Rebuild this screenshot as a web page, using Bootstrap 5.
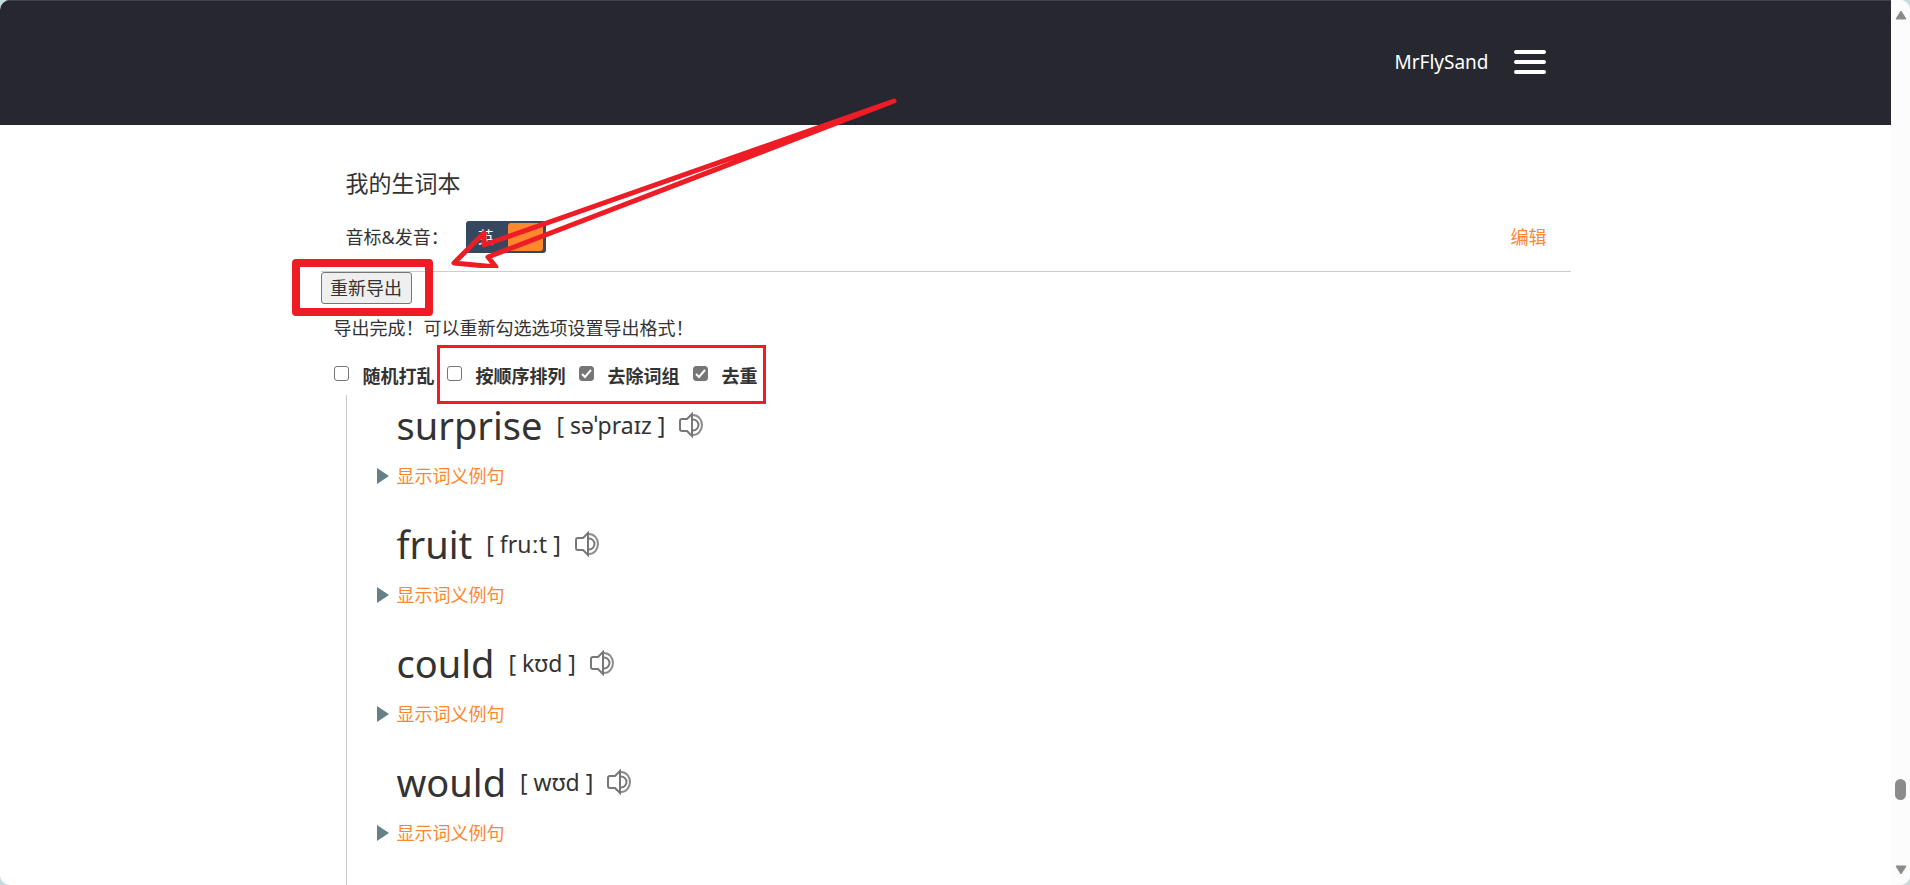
<!DOCTYPE html>
<html lang="zh-CN">
<head>
<meta charset="utf-8">
<meta name="viewport" content="width=device-width, initial-scale=1">
<title>我的生词本</title>
<link href="https://cdn.jsdelivr.net/npm/bootstrap@5.3.0/dist/css/bootstrap.min.css" rel="stylesheet">
<style>
html{background:#c3dcde}
body{font-family:"Noto Sans","Noto Sans CJK SC",sans-serif;font-size:18px;line-height:24px;color:#333;background:#c3dcde}
.window-frame{height:100vh;border-radius:10px;background:#fff}
.site-head{background:#272730;height:125px;border-top:1px solid #3d444b}
.wrap{max-width:1250px;width:100%;margin:0 auto}
.user-link{color:#fff;text-decoration:none;font-size:19px}
.menu-btn{border:0;background:none;padding:0;width:32px;height:26px;margin:0 25px}
.menu-btn svg,.speak svg{display:block}
.page-title{font-size:23px;line-height:32px;font-weight:400}
.accent{color:#ff872e;text-decoration:none}
.top-box{border-bottom:1px solid #ccc;padding:42px 24px 18px 25px}
.voice-row{margin-top:22px}
.voice{margin-left:17px}
.switch-btn{width:80px;height:32px;border:0;border-radius:3px;background:#35485f;color:#fff;font-size:16px;padding:2px 3px 2px 12px}
.knob{width:35px;height:28px;border-radius:3px;background:#ff872e}
.export-btn{display:block;width:91px;height:32px;border:1px solid #767676;border-radius:3px;background:#efefef;color:#333;padding:0}
.notice{margin:12px 0 0 13px}
.opts{padding:24px 0 0 13px;height:55px;gap:12px}
.others{gap:13px}
.opt{gap:14px}
.opts input{width:15px;height:15px;margin:2px 0 0;border:1px solid #767676;border-radius:3px;appearance:none;background:#fff;flex:none}
.opts input:checked{background:#767676 url("data:image/svg+xml,%3Csvg xmlns='http://www.w3.org/2000/svg' viewBox='0 0 13 13'%3E%3Cpath d='M2 7L5 10L11 3' fill='none' stroke='white' stroke-width='2'/%3E%3C/svg%3E") center/13px}
.opts label{font-weight:700}
.words{margin:0 0 0 25px;padding:0 0 0 50px;border-left:1px solid #ccc}
.entry{height:119px}
.head-row{height:60px;gap:14px}
.term{font-size:38px;line-height:60px;font-weight:400}
.phon{font-size:23px;line-height:60px}
.speak{border:0;background:none;padding:0}
.more{margin:9px 0 0 -20px;gap:8px}
.side-scroll{width:19px;background:#fcfcfc;padding:10px 0}
.scroll-thumb{width:11px;height:21px;border-radius:6px;background:#8b8b8b;margin-bottom:65px}
.mark-btn{left:-29px;top:-13px;width:141px;height:57px;border:8px solid #ee1c25;border-radius:4px}
.mark-opts{left:-10px;top:-19px;width:329px;height:59px;border:3px solid #ee1c25}
.mark-arrow{left:-16px;top:-123px}
.note{pointer-events:none}
</style>
</head>
<body>
<svg class="d-none">
<symbol id="speaker" viewBox="0 0 24 26"><g fill="none" stroke="#777" stroke-width="2"><path d="M8 7H3Q1 7 1 9V17Q1 19 3 19H8L13 24V2Z"/><path d="M14 7.500A5.500 5.500 0 0 1 14 18.500"/><path d="M14 3A9 10 0 0 1 14 23" stroke="#8c8c8c"/></g></symbol>
<symbol id="tri" viewBox="0 0 12 16"><path d="M0 0L12 8L0 16Z" fill="#658086"/></symbol>
</svg>
<div class="window-frame d-flex overflow-hidden">
<div class="flex-grow-1 overflow-hidden">
<header class="site-head">
<div class="wrap d-flex justify-content-end align-items-center pt-5">
<a class="user-link" href="#">MrFlySand</a>
<button class="menu-btn" aria-label="菜单"><svg width="32" height="26" viewBox="0 0 32 26"><path d="M2 3H30M2 13H30M2 23H30" stroke="#fff" stroke-width="4" stroke-linecap="round"/></svg></button>
</div>
</header>
<main class="wrap">
<section class="top-box">
<h1 class="page-title mb-0">我的生词本</h1>
<div class="voice-row d-flex align-items-center">
<span>音标&amp;发音：</span>
<div class="position-relative voice">
<button class="switch-btn d-flex justify-content-between align-items-center"><span>英</span><span class="knob"></span></button>
<svg class="note mark-arrow position-absolute" width="450" height="170" viewBox="450 97 450 170" fill="none" stroke="#ee1c25" stroke-width="5" stroke-linejoin="round" stroke-linecap="round"><path d="M894 100L484 244L484 232L454 262L496 266L488 256Z"/></svg>
</div>
<a class="accent ms-auto" href="#">编辑</a>
</div>
</section>
<div class="position-relative">
<button class="export-btn">重新导出</button>
<div class="note mark-btn position-absolute"></div>
</div>
<p class="notice">导出完成！可以重新勾选选项设置导出格式！</p>
<div class="opts d-flex">
<div class="d-flex opt"><input type="checkbox" id="o1"><label for="o1">随机打乱</label></div>
<div class="d-flex position-relative others">
<div class="d-flex opt"><input type="checkbox" id="o2"><label for="o2">按顺序排列</label></div>
<div class="d-flex opt"><input type="checkbox" id="o3" checked><label for="o3">去除词组</label></div>
<div class="d-flex opt"><input type="checkbox" id="o4" checked><label for="o4">去重</label></div>
<div class="note mark-opts position-absolute"></div>
</div>
</div>
<div class="words">
<div class="entry">
<div class="head-row d-flex align-items-center"><span class="term">surprise</span><span class="phon">[ səˈpraɪz ]</span><button class="speak" aria-label="发音"><svg width="24" height="26"><use href="#speaker"/></svg></button></div>
<div class="more d-flex align-items-center"><svg width="12" height="16"><use href="#tri"/></svg><a class="accent" href="#">显示词义例句</a></div>
</div>
<div class="entry">
<div class="head-row d-flex align-items-center"><span class="term">fruit</span><span class="phon">[ fruːt ]</span><button class="speak" aria-label="发音"><svg width="24" height="26"><use href="#speaker"/></svg></button></div>
<div class="more d-flex align-items-center"><svg width="12" height="16"><use href="#tri"/></svg><a class="accent" href="#">显示词义例句</a></div>
</div>
<div class="entry">
<div class="head-row d-flex align-items-center"><span class="term">could</span><span class="phon">[ kʊd ]</span><button class="speak" aria-label="发音"><svg width="24" height="26"><use href="#speaker"/></svg></button></div>
<div class="more d-flex align-items-center"><svg width="12" height="16"><use href="#tri"/></svg><a class="accent" href="#">显示词义例句</a></div>
</div>
<div class="entry">
<div class="head-row d-flex align-items-center"><span class="term">would</span><span class="phon">[ wʊd ]</span><button class="speak" aria-label="发音"><svg width="24" height="26"><use href="#speaker"/></svg></button></div>
<div class="more d-flex align-items-center"><svg width="12" height="16"><use href="#tri"/></svg><a class="accent" href="#">显示词义例句</a></div>
</div>
<div class="entry">
<div class="head-row d-flex align-items-center"><span class="term">job</span></div>
</div>
</div>
</main>
</div>
<div class="side-scroll d-flex flex-column align-items-center justify-content-between">
<svg class="flex-shrink-0" width="12" height="10" viewBox="0 0 12 10"><path d="M6 1L11 9H1Z" fill="#8b8b8b" stroke="#8b8b8b" stroke-linejoin="round"/></svg>
<div class="scroll-thumb mt-auto"></div>
<svg class="flex-shrink-0" width="12" height="10" viewBox="0 0 12 10"><path d="M6 9L11 1H1Z" fill="#8b8b8b" stroke="#8b8b8b" stroke-linejoin="round"/></svg>
</div>
</div>
<script src="https://cdn.jsdelivr.net/npm/bootstrap@5.3.0/dist/js/bootstrap.bundle.min.js"></script>
</body>
</html>
